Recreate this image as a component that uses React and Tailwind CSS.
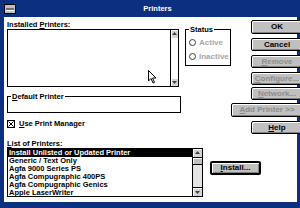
import React from 'react';

const Btn = ({ children, className = '', disabled = false }) => (
  <div
    className={`flex items-center justify-center rounded-[2px] border border-black bg-[#c0c0c0] shadow-[inset_1px_1px_0_#fff,inset_-1px_-1px_0_#808080] text-[8px] font-bold leading-none ${
      disabled ? 'text-[#8c8c8c]' : 'text-black'
    } ${className}`}
  >
    {children}
  </div>
);

const Arrow = ({ up }) => (
  <div className="flex h-[8px] items-center justify-center bg-[#d4d4d4] shadow-[inset_1px_1px_0_#fff]">
    <svg width="5" height="4" viewBox="0 0 5 4">
      {up ? <path d="M2.5 0 L5 3 L0 3 Z" fill="#404040" /> : <path d="M0 1 L5 1 L2.5 4 Z" fill="#404040" />}
    </svg>
  </div>
);

const U = ({ children }) => <span className="underline underline-offset-1">{children}</span>;

const Radio = ({ label }) => (
  <div className="flex items-center gap-[3px] text-[8px] font-bold leading-[9px] text-[#a8a8a8]">
    <span className="h-[7px] w-[7px] rounded-full border border-[#404040] bg-white" />
    <span>{label}</span>
  </div>
);

const printers = [
  'Install Unlisted or Updated Printer',
  'Generic / Text Only',
  'Agfa 9000 Series PS',
  'Agfa Compugraphic 400PS',
  'Agfa Compugraphic Genics',
  'Apple LaserWriter',
];

export default function App() {
  return (
    <div className="flex h-[208px] w-[300px] flex-col bg-[#0c2f80] pb-[6px] pl-[4px] pr-[3px] font-['Liberation_Sans',Arial,sans-serif]">
      {/* title bar */}
      <div className="flex h-[17px] shrink-0 items-start pt-[4px]">
        <div className="flex h-[10px] w-[12px] items-center justify-center border border-black bg-[#c0c0c0]">
          <span className="h-[2px] w-[8px] bg-[#707070] shadow-[0_1px_0_#fff]" />
        </div>
        <div className="flex-1 pl-[2px] text-center text-[7.5px] font-bold leading-[9px] text-white">Printers</div>
      </div>

      {/* body */}
      <div className="relative flex-1 bg-white text-black">
        <div className="flex">
          {/* left column */}
          <div className="w-[234px] pl-[3px]">
            <div className="mt-[3px] h-[9px] text-[7.5px] font-bold leading-[9px]">
              Installed <U>P</U>rinters:
            </div>
            <div className="flex items-start">
              <div className="flex h-[58px] w-[172px] border border-black">
                <div className="flex-1" />
                <div className="flex w-[8px] flex-col justify-between border-l border-black">
                  <Arrow up />
                  <Arrow />
                </div>
              </div>
              <div className="relative ml-[6px] h-[37px] w-[46px] border border-black">
                <div className="absolute -top-[5px] left-[3px] bg-white px-[1px] text-[7.5px] font-bold leading-[9px]">Status</div>
                <div className="mt-[8px] flex flex-col gap-[5px] pl-[3px]">
                  <Radio label="Active" />
                  <Radio label="Inactive" />
                </div>
              </div>
            </div>
            <div className="relative mt-[9px] h-[17px] w-[174px] border border-black">
              <div className="absolute -top-[5px] left-[3px] bg-white px-[1px] text-[7.5px] font-bold leading-[9px]">
                <U>D</U>efault Printer
              </div>
            </div>
            <div className="mt-[6px] flex items-center gap-[4px] text-[7.5px] font-bold leading-[9px]">
              <svg width="8" height="8" viewBox="0 0 8 8">
                <rect x="0.5" y="0.5" width="7" height="7" fill="#fff" stroke="#000" />
                <path d="M1.5 1.5 L6.5 6.5 M6.5 1.5 L1.5 6.5" stroke="#000" strokeWidth="1" />
              </svg>
              <span>
                <U>U</U>se Print Manager
              </span>
            </div>
          </div>

          {/* right buttons */}
          <div className="flex flex-1 flex-col items-end pr-[4px]">
            <Btn className="mt-[3px] h-[14px] w-[52px]">OK</Btn>
            <Btn className="mt-[4px] h-[13px] w-[52px]">Cancel</Btn>
            <Btn className="mt-[4px] h-[13px] w-[52px]" disabled>
              <U>R</U>emove
            </Btn>
            <Btn className="mt-[4px] h-[13px] w-[52px]" disabled>
              <U>C</U>onfigure...
            </Btn>
            <Btn className="mt-[2px] h-[13px] w-[52px]" disabled>
              <U>N</U>etwork...
            </Btn>
            <Btn className="mt-[3px] h-[14px] w-[72px]" disabled>
              <U>A</U>dd Printer &gt;&gt;
            </Btn>
            <Btn className="mt-[4px] h-[13px] w-[52px]">
              <U>H</U>elp
            </Btn>
          </div>
        </div>

        {/* bottom list */}
        <div className="mt-[5px] pl-[3px]">
          <div className="h-[9px] text-[7.5px] font-bold leading-[9px]">
            <U>L</U>ist of Printers:
          </div>
          <div className="flex items-start">
            <div className="flex h-[49px] w-[196px] overflow-hidden border border-black">
              <div className="flex-1 overflow-hidden">
                {printers.map((p, i) => (
                  <div
                    key={p}
                    className={`h-[8px] whitespace-nowrap pl-[1px] text-[7.5px] font-bold leading-[8px] ${
                      i === 0 ? 'bg-black text-white' : 'text-black'
                    }`}
                  >
                    {p}
                  </div>
                ))}
              </div>
              <div className="flex w-[10px] flex-col border-l border-black bg-[#e4e4e4]">
                <Arrow up />
                <div className="h-[8px] border-y border-black bg-[#c0c0c0] shadow-[inset_1px_1px_0_#fff]" />
                <div className="flex-1" />
                <div className="border-t border-black">
                  <Arrow />
                </div>
              </div>
            </div>
            <div className="ml-[7px] mt-[13px]">
              <div className="flex h-[14px] w-[51px] items-center justify-center rounded-[2px] border-2 border-black bg-[#c0c0c0] shadow-[inset_1px_1px_0_#fff,inset_-1px_-1px_0_#808080] text-[8px] font-bold leading-none">
                <U>I</U>nstall...
              </div>
            </div>
          </div>
        </div>

        {/* mouse pointer */}
        <svg className="absolute left-[144px] top-[53px]" width="9" height="14" viewBox="0 0 9 14">
          <path d="M0.5 0.5 L0.5 11 L3 8.5 L5 13 L6.5 12.3 L4.6 8 L8 8 Z" fill="#fff" stroke="#000" strokeWidth="1" strokeLinejoin="round" />
        </svg>
      </div>
    </div>
  );
}
